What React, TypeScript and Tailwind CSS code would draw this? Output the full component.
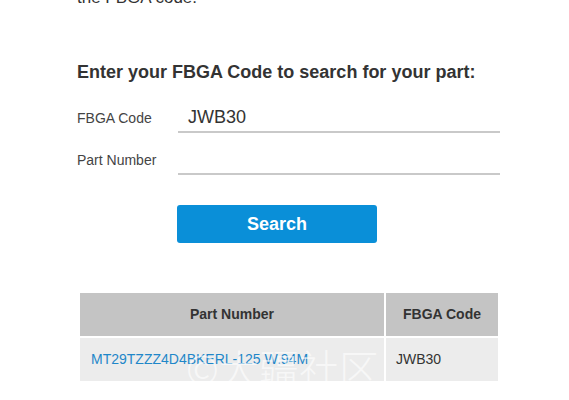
import React from "react";

const font = { fontFamily: '"Liberation Sans", Arial, sans-serif' };

function Field({ label, value }: { label: string; value?: string }) {
  return (
    <div className="flex items-baseline">
      <div className="w-[101px] text-[14px] leading-[20px] text-[#444]">{label}</div>
      <div className="h-[34px] w-[322px] border-b-2 border-[#c9c9c9] pl-[10px] pt-[4px] text-[18px] leading-[28px] text-[#333]">
        {value || "\u00a0"}
      </div>
    </div>
  );
}

export default function App() {
  return (
    <div className="relative h-[400px] w-[569px] overflow-hidden bg-white" style={font}>
      <div className="pl-[77px]">
        <p className="-mt-[14px] text-[17px] leading-[24px] text-[#333]">the FBGA code.</p>

        <h2 className="mt-[50px] text-[18px] font-bold leading-[24px] text-[#333]">
          Enter your FBGA Code to search for your part:
        </h2>

        <div className="mt-[15px] flex flex-col gap-[8px]">
          <Field label="FBGA Code" value="JWB30" />
          <Field label="Part Number" />
        </div>

        <button className="ml-[100px] mt-[30px] h-[38px] w-[200px] rounded-[3px] bg-[#0a8fd8] text-[18px] font-bold text-white">
          Search
        </button>

        <table className="ml-[3px] mt-[50px] w-[418px] border-collapse text-[14px]">
          <thead>
            <tr className="border-b-2 border-white">
              <th className="h-[44px] w-[305px] border-r-2 border-white bg-[#c4c4c4] text-center font-bold text-[#333]">
                Part Number
              </th>
              <th className="h-[44px] bg-[#c4c4c4] text-center font-bold text-[#333]">FBGA Code</th>
            </tr>
          </thead>
          <tbody>
            <tr>
              <td className="h-[44px] border-r-2 border-white bg-[#ececec] pl-[11px] text-[#1f87c9]">
                MT29TZZZ4D4BKERL-125 W.94M
              </td>
              <td className="h-[44px] bg-[#ececec] pl-[10px] text-[#333]">JWB30</td>
            </tr>
          </tbody>
        </table>
      </div>

      <div
        className="pointer-events-none absolute left-[186px] top-[343px] text-[40px] font-light leading-[48px] text-white/60"
        style={{ fontFamily: '"Noto Sans CJK SC", sans-serif' }}
      >
        ©大疆社区
      </div>
    </div>
  );
}
